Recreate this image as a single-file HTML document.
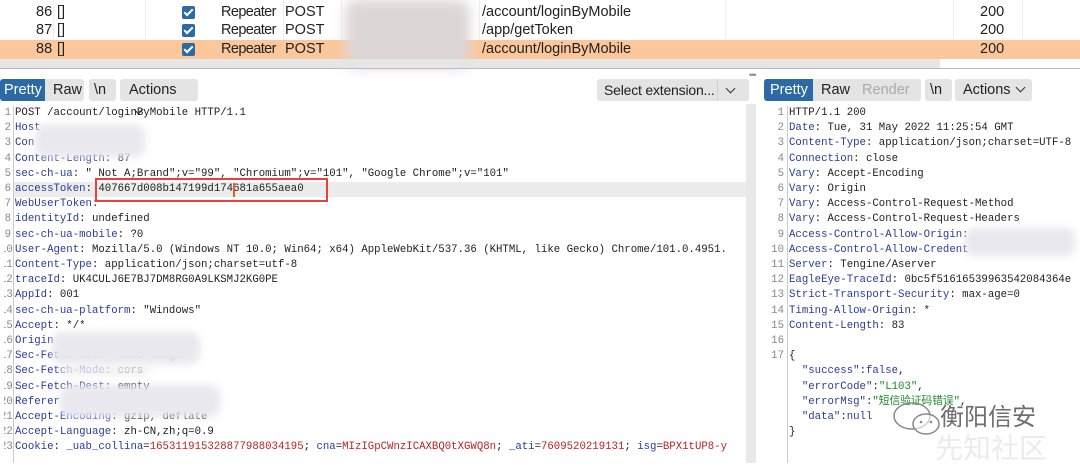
<!DOCTYPE html>
<html><head><meta charset="utf-8">
<style>
*{margin:0;padding:0;box-sizing:border-box}
body{width:1080px;height:463px;overflow:hidden;background:#fff;position:relative;font-family:"Liberation Sans","Noto Sans CJK SC",sans-serif}
.abs{position:absolute}
.row{position:absolute;left:0;width:1080px;height:19px;font-size:14.5px;color:#222;line-height:19px}
.row span{position:absolute;top:0}
.cb{position:absolute;top:3px;left:182px;width:13px;height:13px;background:#2c6aa6;border-radius:2px}
.cb:after{content:"";position:absolute;left:4px;top:1px;width:3px;height:7px;border:solid #fff;border-width:0 2px 2px 0;transform:rotate(45deg)}
.vl{position:absolute;top:0;height:59px;width:1px;background:#eee}
.btn{position:absolute;top:79px;height:22px;background:#e4e4e4;border-radius:3px;font-size:14.5px;line-height:22px;color:#222;padding:0 6px}
.code{position:absolute;font-family:"Liberation Mono","Noto Sans CJK SC",monospace;font-size:10.7px;line-height:15.2px;white-space:pre;color:#222;font-variant-ligatures:none;font-feature-settings:"liga" 0,"calt" 0}
.ln{position:absolute;font-family:"Liberation Mono",monospace;font-size:10.7px;line-height:15.2px;color:#888;text-align:right;white-space:pre}
.k{color:#2b3a9a}.r{color:#b22}.g{color:#1a8a2a}
.blur{position:absolute;background:#e8e8ee;filter:blur(4px);border-radius:10px}
.rp{letter-spacing:-0.6px}
.chev{display:inline-block;width:7px;height:7px;border:solid #333;border-width:0 1.6px 1.6px 0;transform:rotate(45deg);margin-left:6px;position:relative;top:-3px}
</style></head><body>
<div class="vl" style="left:53px"></div><div class="vl" style="left:145px"></div><div class="vl" style="left:283px"></div><div class="vl" style="left:341px"></div><div class="vl" style="left:479px"></div><div class="vl" style="left:725px"></div><div class="vl" style="left:953px"></div><div class="vl" style="left:1022px"></div>
<div class="row" style="top:3px"><span style="left:36px">86</span><span style="left:57px">[]</span><div class="cb"></div><span class="rp" style="left:221px">Repeater</span><span style="left:285px">POST</span><span style="left:482px">/account/loginByMobile</span><span style="left:980px">200</span></div>
<div class="row" style="top:21px"><span style="left:36px">87</span><span style="left:57px">[]</span><div class="cb"></div><span class="rp" style="left:221px">Repeater</span><span style="left:285px">POST</span><span style="left:482px">/app/getToken</span><span style="left:980px">200</span></div>
<div class="row" style="top:40px;background:#fcc79b"><span style="left:36px">88</span><span style="left:57px">[]</span><div class="cb"></div><span class="rp" style="left:221px">Repeater</span><span style="left:285px">POST</span><span style="left:482px">/account/loginByMobile</span><span style="left:980px">200</span></div>
<div class="blur" style="left:345px;top:0;width:125px;height:68px;background:#ddd6d6;filter:blur(6px)"></div>
<div class="abs" style="left:0;top:59px;width:940px;height:9px;background:#e6e6e6"></div>
<div class="abs" style="left:0;top:68px;width:1080px;height:1px;background:#b9b9c6"></div>
<div class="abs" style="left:749px;top:70px;font-size:9px;color:#888;letter-spacing:-1px">•••</div>
<div class="btn" style="left:0;width:45px;background:#2c6aa6;color:#fff;border-radius:3px 0 0 3px;padding:0 4px">Pretty</div>
<div class="btn" style="left:45px;width:39px;border-radius:0 3px 3px 0;padding:0 8px">Raw</div>
<div class="btn" style="left:89px;width:27px;padding:0 5px">\n</div>
<div class="btn" style="left:120px;width:78px;padding:0 9px">Actions<span class="chev"></span></div>
<div class="btn" style="left:597px;width:152px;padding:0 7px;font-size:14px;letter-spacing:-0.2px">Select extension...<span style="position:absolute;left:120px;top:0;width:1px;height:22px;background:#d0d0d0"></span><span class="chev" style="position:absolute;left:130px;top:6px;margin:0"></span></div>
<div class="btn" style="left:764px;width:49px;background:#2c6aa6;color:#fff;border-radius:3px 0 0 3px">Pretty</div>
<div class="btn" style="left:813px;width:108px;border-radius:0 3px 3px 0;padding:0 8px">Raw <span style="color:#aaa;margin-left:8px">Render</span></div>
<div class="btn" style="left:925px;width:27px;padding:0 5px">\n</div>
<div class="btn" style="left:955px;width:77px;padding:0 8px">Actions<span class="chev"></span></div>
<div class="abs" style="left:746px;top:104px;width:10px;height:359px;background:#e8e8e8"></div>
<div class="abs" style="left:14px;top:182px;width:732px;height:15px;background:#ececec"></div>
<div class="abs" style="left:13px;top:106px;width:1px;height:357px;background:#ccc"></div>
<div class="ln" style="left:0;top:106px;width:11px">1
2
3
4
5
6
7
8
9
10
11
12
13
14
15
16
17
18
19
20
21
22
23</div>
<div class="abs" style="left:0;top:106px;width:4px;height:360px;background:#fff"></div>
<div class="code" style="left:15px;top:106px">POST /account/<span>login</span><span>ByMobile</span> HTTP/1.1
<span class="k">Host</span>
<span class="k">Con</span>
<span class="k">Content-Length</span>: 87
<span class="k">sec-ch-ua</span>: " Not A;Brand";v="99", "Chromium";v="101", "Google Chrome";v="101"
<span class="k">accessToken</span>: 407667d008b147199d174681a655aea0
<span class="k">WebUserToken</span>:
<span class="k">identityId</span>: undefined
<span class="k">sec-ch-ua-mobile</span>: ?0
<span class="k">User-Agent</span>: Mozilla/5.0 (Windows NT 10.0; Win64; x64) AppleWebKit/537.36 (KHTML, like Gecko) Chrome/101.0.4951.
<span class="k">Content-Type</span>: application/json;charset=utf-8
<span class="k">traceId</span>: UK4CULJ6E7BJ7DM8RG0A9LKSMJ2KG0PE
<span class="k">AppId</span>: 001
<span class="k">sec-ch-ua-platform</span>: "Windows"
<span class="k">Accept</span>: */*
<span class="k">Origin</span>
<span class="k">Sec-Fetch-Site</span>: same-origin
<span class="k">Sec-Fetch-Mode</span>: cors
<span class="k">Sec-Fetch-Dest</span>: empty
<span class="k">Referer</span>
<span class="k">Accept-Encoding</span>: gzip, deflate
<span class="k">Accept-Language</span>: zh-CN,zh;q=0.9
<span class="k">Cookie</span>: <span class="k">_uab_collina</span>=<span class="r">165311915328877988034195</span>; <span class="k">cna</span>=<span class="r">MIzIGpCWnzICAXBQ0tXGWQ8n</span>; <span class="k">_ati</span>=<span class="r">7609520219131</span>; <span class="k">isg</span>=<span class="r">BPX1tUP8-y</span></div>
<div class="abs" style="left:95px;top:178px;width:233px;height:24px;border:2px solid #e8403a"></div>
<div class="abs" style="left:233px;top:183px;width:2px;height:14px;background:#e06020"></div>
<div class="blur" style="left:35px;top:125px;width:110px;height:32px"></div>
<div class="blur" style="left:52px;top:332px;width:148px;height:32px"></div>
<div class="blur" style="left:60px;top:385px;width:160px;height:32px"></div>
<div class="blur" style="left:60px;top:365px;width:90px;height:10px;background:#f0f0f0"></div>
<div class="abs" style="left:787px;top:106px;width:1px;height:357px;background:#ccc"></div>
<div class="ln" style="left:768px;top:106px;width:16px">1
2
3
4
5
6
7
8
9
10
11
12
13
14
15
16
17</div>
<div class="code" style="left:789px;top:106px">HTTP/1.1 200
<span class="k">Date</span>: Tue, 31 May 2022 11:25:54 GMT
<span class="k">Content-Type</span>: application/json;charset=UTF-8
<span class="k">Connection</span>: close
<span class="k">Vary</span>: Accept-Encoding
<span class="k">Vary</span>: Origin
<span class="k">Vary</span>: Access-Control-Request-Method
<span class="k">Vary</span>: Access-Control-Request-Headers
<span class="k">Access-Control-Allow-Origin</span>:
<span class="k">Access-Control-Allow-Credent</span>
<span class="k">Server</span>: Tengine/Aserver
<span class="k">EagleEye-TraceId</span>: 0bc5f51616539963542084364e
<span class="k">Strict-Transport-Security</span>: max-age=0
<span class="k">Timing-Allow-Origin</span>: *
<span class="k">Content-Length</span>: 83

{
  <span class="k">"success"</span>:<span class="k">false</span>,
  <span class="k">"errorCode"</span>:<span class="g">"L103"</span>,
  <span class="k">"errorMsg"</span>:<span class="g">"短信验证码错误"</span>,
  <span class="k">"data"</span>:<span class="k">null</span>
}</div>
<div class="blur" style="left:965px;top:228px;width:110px;height:28px"></div>
<svg class="abs" style="left:890px;top:400px" width="60" height="40" viewBox="0 0 60 40"><ellipse cx="22" cy="16" rx="18" ry="13" fill="none" stroke="#888" stroke-width="1.5"/><ellipse cx="36" cy="24" rx="13" ry="10" fill="rgba(255,255,255,.6)" stroke="#888" stroke-width="1.5"/><circle cx="31" cy="22" r="1.3" fill="#888"/><circle cx="41" cy="22" r="1.3" fill="#888"/></svg>
<div class="abs" style="left:940px;top:400px;font-size:24px;color:#6e6e6e;font-family:'Noto Sans CJK SC',sans-serif;line-height:30px">衡阳信安</div>
<div class="abs" style="left:935px;top:430px;font-size:28px;color:#ebebeb;font-family:'Noto Sans CJK SC',sans-serif;line-height:34px">先知社区</div>
</body></html>
